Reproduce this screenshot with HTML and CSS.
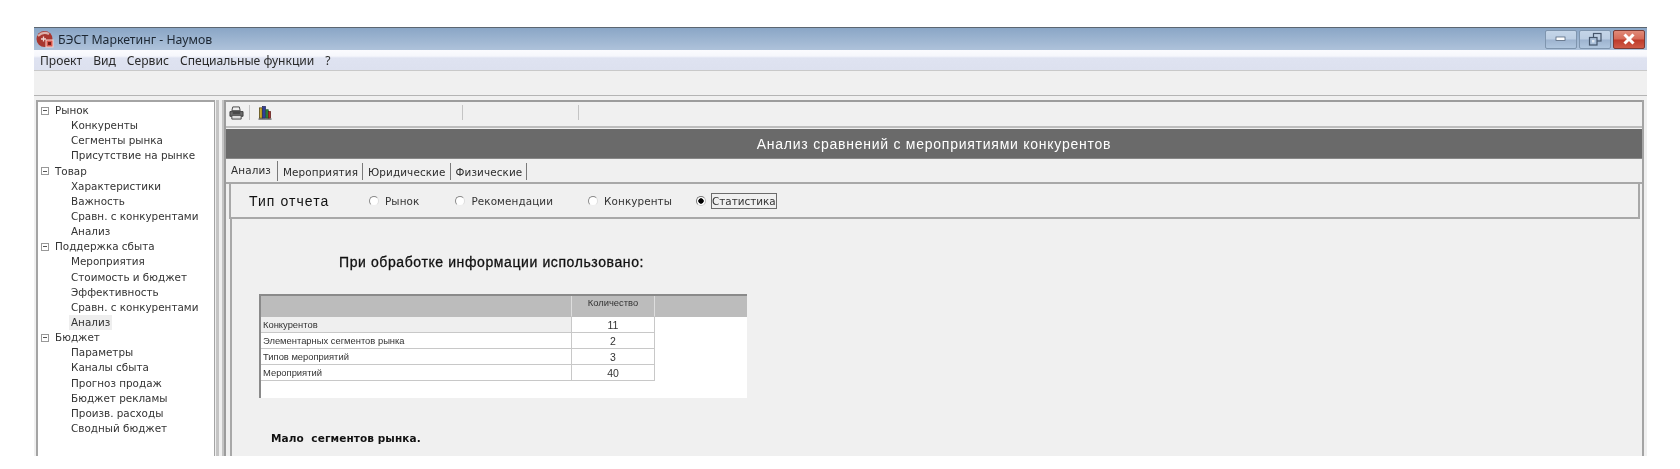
FILE: index.html
```html
<!DOCTYPE html>
<html lang="ru">
<head>
<meta charset="utf-8">
<title>БЭСТ Маркетинг - Наумов</title>
<link rel="stylesheet" href="styles.css">
</head>
<body>
<div class="app">
  <header class="titlebar">
    <svg class="appicon" width="18" height="18" viewBox="0 0 18 18"><circle cx="8.5" cy="9" r="8" fill="#a8362f"/><path d="M2 6q5-5 11-2" stroke="#dcb0aa" stroke-width="2" fill="none"/><path d="M5 9h5M7.5 6.5v5" stroke="#f0d5d0" stroke-width="1.3"/><rect x="10" y="10" width="7" height="7" fill="#d8554a" stroke="#f3d2cd"/><rect x="12" y="12" width="3" height="3" fill="#7d1e18"/></svg>
    <span class="apptitle">БЭСТ Маркетинг - Наумов</span>
    <div class="winbtns">
      <span class="winbtn"><svg width="12" height="6" viewBox="0 0 12 6"><rect x="1" y="1" width="9" height="3.5" fill="#fff" stroke="#44566e" stroke-width=".7"/></svg></span>
      <span class="winbtn"><svg width="14" height="14" viewBox="0 0 14 14"><rect x="5.5" y="1.5" width="7.5" height="7.5" fill="none" stroke="#45566c" stroke-width="1.2"/><rect x="1.5" y="5.5" width="7.5" height="7.5" fill="#a9bfd9" stroke="#45566c" stroke-width="1.2"/><rect x="4" y="8" width="2.5" height="2.5" fill="#dfe8f2"/></svg></span>
      <span class="winbtn close"><svg width="14" height="12" viewBox="0 0 14 12"><path d="M2.5 1.5l9 9M11.5 1.5l-9 9" stroke="#fff" stroke-width="3"/></svg></span>
    </div>
  </header>
  <nav class="menubar">
    <span>Проект</span><span>Вид</span><span>Сервис</span><span>Специальные функции</span><span>?</span>
  </nav>
  <div class="strip"></div>
  <div class="workspace">
    <aside class="tree">
      <div class="node"><i class="toggle"></i>Рынок</div>
      <div class="leaf">Конкуренты</div>
      <div class="leaf">Сегменты рынка</div>
      <div class="leaf">Присутствие на рынке</div>
      <div class="node"><i class="toggle"></i>Товар</div>
      <div class="leaf">Характеристики</div>
      <div class="leaf">Важность</div>
      <div class="leaf">Сравн. с конкурентами</div>
      <div class="leaf">Анализ</div>
      <div class="node"><i class="toggle"></i>Поддержка сбыта</div>
      <div class="leaf">Мероприятия</div>
      <div class="leaf">Стоимость и бюджет</div>
      <div class="leaf">Эффективность</div>
      <div class="leaf">Сравн. с конкурентами</div>
      <div class="leaf"><span class="selected">Анализ</span></div>
      <div class="node"><i class="toggle"></i>Бюджет</div>
      <div class="leaf">Параметры</div>
      <div class="leaf">Каналы сбыта</div>
      <div class="leaf">Прогноз продаж</div>
      <div class="leaf">Бюджет рекламы</div>
      <div class="leaf">Произв. расходы</div>
      <div class="leaf">Сводный бюджет</div>
    </aside>
    <div class="splitter"></div>
    <main class="main">
      <div class="tools">
        <svg class="tool" width="15" height="14" viewBox="0 0 16 15"><path d="M4 1h7l1 4H3z" fill="#eee" stroke="#444"/><path d="M1 6h14v5H1z" fill="#6d6d6d" stroke="#3a3a3a"/><path d="M3 10h10v4H3z" fill="#ddd" stroke="#444"/><path d="M4 7.5h8" stroke="#222"/></svg>
        <i class="tsep first"></i>
        <svg class="tool" width="14" height="14" viewBox="0 0 14 15"><rect x="1" y="2" width="3" height="11" fill="#c9a92c" stroke="#3d3208" stroke-width=".7"/><rect x="4.5" y="0.5" width="3" height="12.5" fill="#2f3f9a" stroke="#1b1d50" stroke-width=".7"/><rect x="8" y="4" width="2.5" height="9" fill="#2f8a3c" stroke="#184a20" stroke-width=".7"/><rect x="10.5" y="6" width="2.5" height="7" fill="#b4322b" stroke="#501512" stroke-width=".7"/><path d="M0 14h14" stroke="#333"/></svg>
        <i class="tsep second"></i>
        <i class="tsep third"></i>
      </div>
      <div class="banner">Анализ сравнений с мероприятиями конкурентов</div>
      <div class="tabs">
        <span class="tab active">Анализ</span>
        <span class="tab">Мероприятия</span>
        <span class="tab">Юридические</span>
        <span class="tab">Физические</span>
      </div>
      <div class="reportbar">
        <span class="reportlabel">Тип отчета</span>
        <label class="radio r1"><i class="dot"></i>Рынок</label>
        <label class="radio r2"><i class="dot"></i>Рекомендации</label>
        <label class="radio r3"><i class="dot"></i>Конкуренты</label>
        <label class="radio r4"><i class="dot on"></i><span class="focused">Статистика</span></label>
      </div>
      <section class="content">
        <h1 class="heading">При обработке информации использовано:</h1>
        <table class="stats">
          <thead><tr><th class="c1"></th><th class="c2">Количество</th><th class="c3"></th></tr></thead>
          <tbody>
            <tr class="current"><td class="c1">Конкурентов</td><td class="c2">11</td><td class="c3"></td></tr>
            <tr><td class="c1">Элементарных сегментов рынка</td><td class="c2">2</td><td class="c3"></td></tr>
            <tr><td class="c1">Типов мероприятий</td><td class="c2">3</td><td class="c3"></td></tr>
            <tr><td class="c1">Мероприятий</td><td class="c2">40</td><td class="c3"></td></tr>
            <tr class="blank"><td class="c1"></td><td class="c3" colspan="2"></td></tr>
          </tbody>
        </table>
        <p class="note">Мало&nbsp; сегментов рынка.</p>
      </section>
    </main>
  </div>
</div>
</body>
</html>
```
FILE: styles.css
```css
* { box-sizing: border-box; }
html, body { margin: 0; height: 469px; overflow: hidden; background: #fff; }
body { padding: 27px 33px 0 34px; font-family: "DejaVu Sans", sans-serif; color: #222; }
.app { width: 1613px; height: 429px; display: flex; flex-direction: column; background: #f0f0f0; filter: blur(0.35px); overflow: hidden; }

.titlebar { height: 23px; flex: none; display: flex; align-items: center; padding: 0 2px 0 2px; border-top: 1px solid #5c6670; background: linear-gradient(#8aa6c6, #aec2da); }
.appicon { flex: none; margin-right: 4px; }
.apptitle { font: 12.3px "Noto Sans", sans-serif; color: #1d2733; }
.winbtns { margin-left: auto; display: flex; gap: 2px; }
.winbtn { width: 32px; height: 19px; display: flex; align-items: center; justify-content: center; border: 1px solid #7f95ae; border-radius: 2px; background: linear-gradient(#c4d5e8 0, #bccee3 48%, #9db3cf 52%, #b0c6de 100%); }
.winbtn.close { border-color: #7a3a34; background: linear-gradient(#e08a78 0, #d66a58 48%, #bd3a2a 52%, #cf5a48 100%); }

.menubar { height: 21px; flex: none; display: flex; align-items: center; gap: 11px; padding-left: 6px; font: 12.1px "Noto Sans", sans-serif; color: #2a2a2a; background: linear-gradient(#fbfbfe, #f6f7fc 30%, #dfe3f1 40%, #dde1ef 95%); border-bottom: 1px solid #c9c9c9; }
.strip { height: 25px; flex: none; background: #f0f0f0; border-bottom: 1px solid #b4b4b4; }

.workspace { flex: 1; min-height: 0; display: flex; padding: 4px 0 0 2px; gap: 0; }
.tree { width: 179px; flex: none; border: 2px solid #a4a4a4; border-right-width: 1px; border-bottom: 0; background: #fff; padding: 1px 0 0 3px; font-size: 10.4px; line-height: 15.14px; color: #333; white-space: nowrap; }
.node { display: flex; align-items: center; }
.toggle { width: 8px; height: 8px; margin-right: 6px; border: 1px solid #999; background: linear-gradient(#555, #555) center / 4px 1px no-repeat; }
.leaf { padding-left: 30px; }
.selected { display: inline-block; padding: 0 2px; margin-left: -2px; background: #eee; }

.splitter { width: 8px; flex: none; margin-left: 1px; border-left: 3px solid #c4c4c4; border-right: 2px solid #c4c4c4; }
.main { width: 1420px; flex: none; border-left: 2px solid #9c9c9c; border-right: 2px solid #a4a4a4; display: flex; flex-direction: column; background: #f0f0f0; }

.tools { height: 28px; flex: none; display: flex; align-items: center; padding: 0 0 3px 3px; border-top: 2px solid #9c9c9c; border-bottom: 2px solid #bdbdbd; }
.tsep { width: 1px; height: 15px; background: #c4c4c4; flex: none; }
.tsep.first { margin: 0 8px 0 5px; }
.tsep.second { margin-left: 190px; }
.tsep.third { margin-left: 115px; }

.banner { height: 30px; flex: none; margin: 1px 0; background: #6a6a6a; color: #fff; display: flex; align-items: center; justify-content: center; font: 14px "Liberation Sans", sans-serif; letter-spacing: .75px; border-bottom: 1px solid #888; }

.tabs { height: 24px; flex: none; display: flex; padding: 0 0 0 5px; font-size: 10.4px; letter-spacing: .12px; color: #2c2c2c; border-bottom: 2px solid #a8a8a8; }
.tab { display: flex; align-items: center; padding: 0 4px 0 5px; margin-top: 3px; height: 17px; border-right: 1px solid #7a7a7a; }
.tab.active { margin-top: 1px; height: 20px; padding: 0 6px 2px 0; }

.reportbar { height: 35px; flex: none; margin: 0 2px 0 3px; display: flex; align-items: center; padding: 1px 0 0 18px; font-size: 10.4px; border-left: 2px solid #a8a8a8; border-right: 2px solid #a8a8a8; border-bottom: 2px solid #a8a8a8; letter-spacing: .1px; color: #333; }
.reportlabel { font: 14px "Liberation Sans", sans-serif; letter-spacing: 1.05px; color: #111; width: 120px; flex: none; }
.radio { display: flex; align-items: center; }
.r2 { margin-left: 36px; }
.r3 { margin-left: 35px; }
.r4 { margin-left: 24px; }
.dot { width: 10px; height: 10px; border-radius: 50%; margin-right: 6px; background: #fff; border: 1px solid; border-color: #888 #ddd #eee #888; flex: none; }
.r4 .dot { margin-right: 5px; }
.dot.on { background: radial-gradient(#000 0, #000 2.4px, #fff 3px); border-color: #777 #bbb #ccc #777; }
.focused { border: 1px solid #6c6c6c; padding: 0; line-height: 14px; letter-spacing: 0; }

.content { flex: 1; min-height: 0; margin: 0 0 0 4px; border-left: 2px solid #a8a8a8; padding: 34px 0 0 27px; overflow: hidden; }
.heading { margin: 0 0 23px 80px; font: normal 14px/18px "Liberation Sans", sans-serif; letter-spacing: .6px; color: #111; -webkit-text-stroke: .3px #111; }
.stats { border-collapse: separate; border-spacing: 0; width: 488px; table-layout: fixed; background: #fff; border-top: 2px solid #8a8a8a; border-left: 2px solid #8a8a8a; font: 9.4px "Liberation Sans", sans-serif; color: #333; }
.stats .c1 { width: 310px; }
.stats .c2 { width: 84px; }
.stats th { height: 21px; background: #bcbcbc; font-weight: normal; padding: 0 0 7px; border-bottom: 1px solid #bcbcbc; }
.stats th.c2 { border-left: 1px solid #ddd; border-right: 1px solid #ddd; }
.stats td { height: 16px; padding: 0 0 0 2px; border-bottom: 1px solid #c8c8c8; white-space: nowrap; }
.stats td.c2 { text-align: center; font-size: 10.5px; border-left: 1px solid #c8c8c8; border-right: 1px solid #c8c8c8; padding: 0; }
.stats td.c3 { border: 0; }
.stats .current .c1 { background: #efefef; }
.stats .blank td { border: 0; height: 17px; }
.note { margin: 32px 0 0 12px; font: bold 10.5px/16px "DejaVu Sans", sans-serif; color: #111; letter-spacing: .1px; }
```
